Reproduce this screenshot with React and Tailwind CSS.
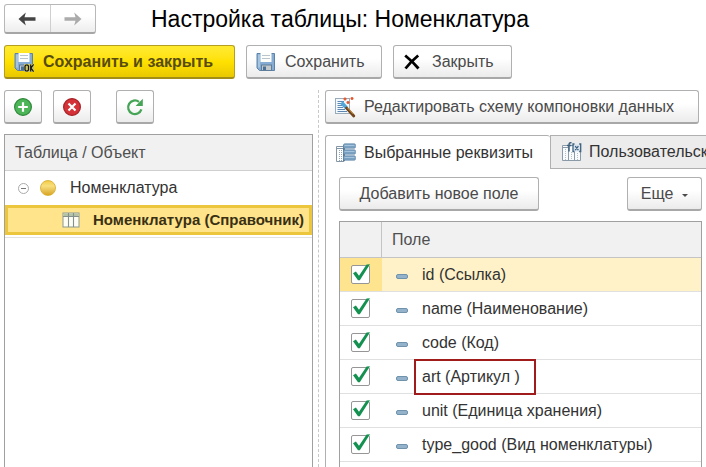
import { useState } from "react";

const fields = [
  { id: "id", label: "id (Ссылка)" },
  { id: "name", label: "name (Наименование)" },
  { id: "code", label: "code (Код)" },
  { id: "art", label: "art (Артикул )", marked: true },
  { id: "unit", label: "unit (Единица хранения)" },
  { id: "type_good", label: "type_good (Вид номенклатуры)" },
];

const buttonBase =
  "flex items-center h-[34px] shrink-0 whitespace-nowrap rounded-[3px] border border-b-2 border-[#b0b0b0] border-b-[#a8a8a8] bg-linear-to-b from-white from-40% to-[#ebebeb] text-[#4a4a4a]";

const Button = ({ className = "", children, ...props }) => (
  <button type="button" className={`${buttonBase} ${className}`} {...props}>
    {children}
  </button>
);

const Arrow = ({ className = "" }) => (
  <svg viewBox="0 0 18 14" className={`w-[18px] h-[14px] ${className}`} fill="currentColor">
    <path d="M0.5 7 7.8 0.5 6.5 5.2H17.5V8.8H6.5L7.8 13.5Z" />
  </svg>
);

const DisketteIcon = ({ ok }) => (
  <svg viewBox="0 0 20 20" className="w-5 h-5 shrink-0">
    <path d="M1 1.5H18.5V18.5H3.5L1 16Z" fill="#86acd3" stroke="#5d82aa" />
    <path d="M2 2.5H4V15.5H2Z" fill="#a5c4e1" />
    <rect x="4.5" y="1" width="11" height="9" fill="#fdfdfa" />
    <path d="M6 3.5H14M6 6.5H14" stroke="#b9c4cd" />
    <rect x="5.5" y="13" width="10" height="5.5" fill="#c3c8cb" stroke="#5f7c98" />
    <rect x="7" y="14.5" width="3" height="3.5" fill="#4b7098" />
    {ok && (
      <g>
        <path d="M10 12H20V20H10Z" fill="#c8c46a" />
        <path
          d="M12 13H13.5L14.5 14V18L13.5 19H12L11 18V14ZM16.7 12.4V19.6M19.6 12.4 17 16 19.6 19.6"
          fill="none"
          stroke="#111"
          strokeWidth="1.2"
        />
      </g>
    )}
  </svg>
);

const CrossIcon = () => (
  <svg viewBox="0 0 16 16" className="w-4 h-4 shrink-0">
    <path d="M1.2 1.5C5.5 5 10.5 9.8 14.5 14.5M14.2 1.5C10 5 5 10 1.5 14.5" fill="none" stroke="#000" strokeWidth="2.8" />
  </svg>
);

const AddIcon = () => (
  <svg viewBox="0 0 20 20" className="w-5 h-5">
    <circle cx="10" cy="10" r="8.4" fill="#4bb558" stroke="#30883b" strokeWidth="1.2" />
    <path d="M10 5.2V14.8M5.2 10H14.8" stroke="#fff" strokeWidth="2.2" />
  </svg>
);

const DeleteIcon = () => (
  <svg viewBox="0 0 20 20" className="w-5 h-5">
    <circle cx="10" cy="10" r="8.4" fill="#d43138" stroke="#a52227" strokeWidth="1.2" />
    <path d="M6.5 6.5 13.5 13.5M13.5 6.5 6.5 13.5" stroke="#fff" strokeWidth="2.2" />
  </svg>
);

const RefreshIcon = () => (
  <svg viewBox="0 0 18 18" className="w-[18px] h-[18px]">
    <path d="M15.4 11.4A6.8 6.8 0 1 1 13 3.8" fill="none" stroke="#45a455" strokeWidth="2.3" />
    <path d="M16.8 .8V8H9.6Z" fill="#45a455" />
  </svg>
);

const WandIcon = () => (
  <svg viewBox="0 0 22 22" className="w-[22px] h-[22px] shrink-0">
    <rect x="1.5" y="2.5" width="14" height="15" fill="#f4f9fd" stroke="#9aabba" />
    <path d="M3.5 5.5H10M3.5 7.5H8M3.5 9.5H8M3.5 11.5H9M3.5 13.5H11M3.5 15.5H13" stroke="#5d88b3" />
    <path d="M7.5 6.5 12.5 12" stroke="#52a5d8" strokeWidth="3.6" />
    <path d="M12.5 12 19.8 20" stroke="#71441b" strokeWidth="2.8" strokeLinecap="round" />
    <path d="M13.5 11.8 19 17.8" stroke="#d69a45" />
    <path d="M11 1.5V4.5M9.5 3H12.5M18 1V4M16.5 2.5H19.5M14 5V8M12.5 6.5H15.5" stroke="#e4572e" strokeWidth="1.6" />
  </svg>
);

const FieldsIcon = () => (
  <svg viewBox="0 0 20 20" className="w-5 h-5 shrink-0">
    <path d="M.5 3.5H8V18.5H.5Z" fill="#fff" stroke="#8496a5" />
    <path d="M.5 5.5H8" stroke="#8496a5" />
    <path d="M3.5 7V18M5.5 7V18" stroke="#94a3af" strokeDasharray="1 1" />
    <path d="M8 2V18" stroke="#567b9a" strokeWidth="2" />
    <g fill="#7ba1c1" stroke="#5f87a8" strokeWidth=".6">
      <rect x="7.5" y=".7" width="12" height="4.6" rx="1.4" />
      <rect x="7.5" y="6.7" width="12" height="4.6" rx="1.4" />
      <rect x="7.5" y="12.7" width="12" height="4.6" rx="1.4" />
    </g>
    <path d="M8.5 2.5H18.5M8.5 8.5H18.5M8.5 14.5H18.5" stroke="#a5c4dd" />
  </svg>
);

const FormulaIcon = () => (
  <svg viewBox="0 0 20 20" className="w-5 h-5 shrink-0">
    <path d="M.5 3.5H18.5V18.5H.5Z" fill="#f8fafb" stroke="#8a9aa8" />
    <path d="M.5 5.5H6M6.5 4V18M12.5 10V18" stroke="#8a9aa8" />
    <path d="M3.5 7V18M9.5 10V18M15.5 11V18" stroke="#b4bec7" strokeDasharray="1 1" />
    <path d="M9.5 .8C7.3.4 7 1.6 7 3V9.5M5 3.5H9.3" fill="none" stroke="#3f617e" strokeWidth="1.5" />
    <path d="M11.5 2.5H19V9.5H11.5Z" fill="#d6e3ee" />
    <path d="M12.5 2H11V9.5H12.5M13.2 4.2 16.4 8.2M16.4 4.2 13.2 8.2M17.2 2H18.7V9.5H17.2" fill="none" stroke="#3f617e" strokeWidth="1.3" />
  </svg>
);

const TableIcon = () => (
  <svg viewBox="0 0 18 16" className="w-[18px] h-4 shrink-0">
    <rect x="1" y="1" width="16" height="14" fill="#fdfdf4" stroke="#8b998f" />
    <rect x="1.5" y="1.5" width="15" height="3" fill="#b3c3a4" />
    <path d="M1 4.5H17M6.5 1V15M11.5 1V15" stroke="#83908b" strokeWidth="1.1" />
  </svg>
);

const BallIcon = () => (
  <span className="w-4 h-4 shrink-0 rounded-full border border-[#dcb53c] bg-linear-to-b from-[#f3cc43] via-[#f8df7d] via-35% to-[#d9a51d]" />
);

const CheckBox = ({ label, checked, onChange }) => (
  <div className="relative w-[19px] h-[19px] ml-[11px]">
    <input
      type="checkbox"
      aria-label={label}
      checked={checked}
      onChange={onChange}
      className="block w-[19px] h-[19px] appearance-none rounded-[2px] border border-[#969696] bg-white"
    />
    {checked && (
      <svg viewBox="0 0 19 19" className="absolute inset-0 w-[19px] h-[19px] overflow-visible pointer-events-none">
        <path d="M2 8.2 4.9 6.6 8 10.8 15.6-.4 19-.8 8.8 15.2 7 15.2Z" fill="#149150" />
      </svg>
    )}
  </div>
);

const Toolbar = () => (
  <header className="px-1 pt-1">
    <div className="flex items-center">
      <div className="flex h-[30px] w-[92px] rounded-[3px] border border-b-2 border-[#b8b8b8] border-b-[#a6a6a6] bg-linear-to-b from-white from-40% to-[#ededed]">
        <button type="button" aria-label="Назад" className="flex flex-1 items-center justify-center border-r border-[#cfcfcf] text-[#444]">
          <Arrow />
        </button>
        <button type="button" aria-label="Вперед" className="flex flex-1 items-center justify-center text-[#ababab]">
          <Arrow className="rotate-180" />
        </button>
      </div>
      <h1 className="ml-[55px] whitespace-nowrap text-[23px] leading-[30px] text-black">Настройка таблицы: Номенклатура</h1>
    </div>

    <div className="mt-[11px] flex gap-[11px]">
      <button
        type="button"
        className="flex items-center h-[34px] w-[231px] shrink-0 gap-[9px] whitespace-nowrap rounded-[3px] border border-b-2 border-[#b49f21] border-b-[#a28d16] bg-linear-to-b from-[#ffea30] via-[#ffe100] to-[#e9c900] pl-[9px] font-bold text-[#574b10]"
      >
        <DisketteIcon ok />
        Сохранить и закрыть
      </button>
      <Button className="w-[136px] gap-[9px] pl-[9px]">
        <DisketteIcon />
        Сохранить
      </Button>
      <Button className="w-[119px] gap-[12px] pl-[10px]">
        <CrossIcon />
        Закрыть
      </Button>
    </div>
  </header>
);

const ObjectTree = () => (
  <div className="flex w-[309px] shrink-0 flex-col">
    <div className="flex">
      <Button aria-label="Добавить" className="w-[38px] justify-center"><AddIcon /></Button>
      <Button aria-label="Удалить" className="ml-[11px] w-[38px] justify-center"><DeleteIcon /></Button>
      <Button aria-label="Обновить" className="ml-[25px] w-[38px] justify-center"><RefreshIcon /></Button>
    </div>

    <div className="mt-[10px] flex-1 border border-b-0 border-[#a0a0a0]">
      <table className="w-full border-separate border-spacing-0">
        <thead>
          <tr>
            <th scope="col" className="h-9 border-b border-[#cfcfcf] bg-[#f1f1f1] pl-[10px] text-left font-normal text-[#4f4f4f]">
              Таблица / Объект
            </th>
          </tr>
        </thead>
        <tbody>
          <tr>
            <td className="h-[34px] p-0">
              <div className="flex items-center pl-[13px]">
                <button type="button" aria-label="Свернуть" className="flex w-[11px] h-[11px] items-center justify-center rounded-full border border-[#aaa]">
                  <span className="w-[5px] h-px bg-[#777]" />
                </button>
                <span className="ml-[11px] flex"><BallIcon /></span>
                <span className="ml-[14px]">Номенклатура</span>
              </div>
            </td>
          </tr>
          <tr>
            <td className="h-[30px] border-[3px] border-[#ecc63c] bg-[#ffe48c] p-0">
              <div className="flex items-center gap-[13px] pl-[54px]">
                <TableIcon />
                <span className="whitespace-nowrap text-[15px] leading-5 font-bold text-[#393014]">Номенклатура (Справочник)</span>
              </div>
            </td>
          </tr>
          <tr>
            <td className="h-[3px] border-b border-[#e2e2e2] p-0" />
          </tr>
        </tbody>
      </table>
    </div>
  </div>
);

const FieldsTable = () => {
  const [checked, setChecked] = useState(fields.map((f) => f.id));

  const toggle = (id) => {
    setChecked(checked.includes(id) ? checked.filter((c) => c !== id) : [...checked, id]);
  };

  return (
    <div className="mt-[10px] flex-1 border border-b-0 border-[#a0a0a0]">
      <table className="w-full table-fixed border-separate border-spacing-0">
        <thead>
          <tr className="bg-[#f1f1f1]">
            <th scope="col" aria-label="Выбор" className="h-9 w-[42px] border-r border-b border-[#c4c4c4]" />
            <th scope="col" className="h-9 border-b border-[#c4c4c4] pl-[10px] text-left font-normal text-[#4f4f4f]">Поле</th>
          </tr>
        </thead>
        <tbody>
          {fields.map((field, i) => (
            <tr key={field.id}>
              <td className={`h-[34px] border-b border-[#e0e0e0] p-0 ${i === 0 ? "bg-[#ffe48f]" : ""}`}>
                <CheckBox label={field.label} checked={checked.includes(field.id)} onChange={() => toggle(field.id)} />
              </td>
              <td className={`h-[34px] border-b border-[#e0e0e0] p-0 ${i === 0 ? "bg-[#fff2c8]" : ""}`}>
                <div className="flex items-center gap-[14px] pl-[14px]">
                  <span className="mt-1 w-3 h-[5px] rounded-[2px] border border-[#6f92ad] bg-[#94b3ca]" />
                  <span className="relative whitespace-nowrap">
                    {field.label}
                    {field.marked && <span className="absolute -inset-y-2 -right-4 -left-2 border-2 border-[#a01c1c]" />}
                  </span>
                </div>
              </td>
            </tr>
          ))}
        </tbody>
      </table>
    </div>
  );
};

const Details = () => (
  <div className="flex min-w-0 flex-1 flex-col overflow-hidden border-l border-dashed border-[#c8c8c8] pl-[6px]">
    <div className="flex">
      <Button className="w-[374px] gap-[8px] pl-[8px]">
        <WandIcon />
        Редактировать схему компоновки данных
      </Button>
    </div>

    <div role="tablist" className="mt-[11px] flex h-[34px]">
      <button
        type="button"
        role="tab"
        aria-selected="true"
        className="flex w-[225px] shrink-0 items-center gap-[8px] whitespace-nowrap rounded-t-[3px] border-t border-l border-[#b0b0b0] pl-[10px]"
      >
        <FieldsIcon />
        Выбранные реквизиты
      </button>
      <button
        type="button"
        role="tab"
        aria-selected="false"
        className="flex flex-1 items-center gap-[7px] overflow-hidden whitespace-nowrap border border-r-0 border-[#b0b0b0] bg-[#ececec] pl-[11px]"
      >
        <FormulaIcon />
        Пользовательские поля
      </button>
    </div>

    <div role="tabpanel" className="flex flex-1 flex-col border-l border-[#b0b0b0] pt-2 pr-1 pl-[13px]">
      <div className="flex justify-between">
        <Button className="w-[200px] justify-center">Добавить новое поле</Button>
        <Button className="w-[75px] justify-center gap-[9px]">
          Еще
          <span className="mt-1 border-x-[3px] border-t-[3px] border-x-transparent border-t-[#4a4a4a]" />
        </Button>
      </div>
      <FieldsTable />
    </div>
  </div>
);

export default function App() {
  return (
    <div className="flex h-screen flex-col overflow-hidden bg-white font-['Liberation_Sans',Arial,sans-serif] text-[16px] leading-5 text-[#333]">
      <Toolbar />
      <main className="mt-[11px] flex min-h-0 flex-1 gap-[5px] pl-1">
        <ObjectTree />
        <Details />
      </main>
    </div>
  );
}
